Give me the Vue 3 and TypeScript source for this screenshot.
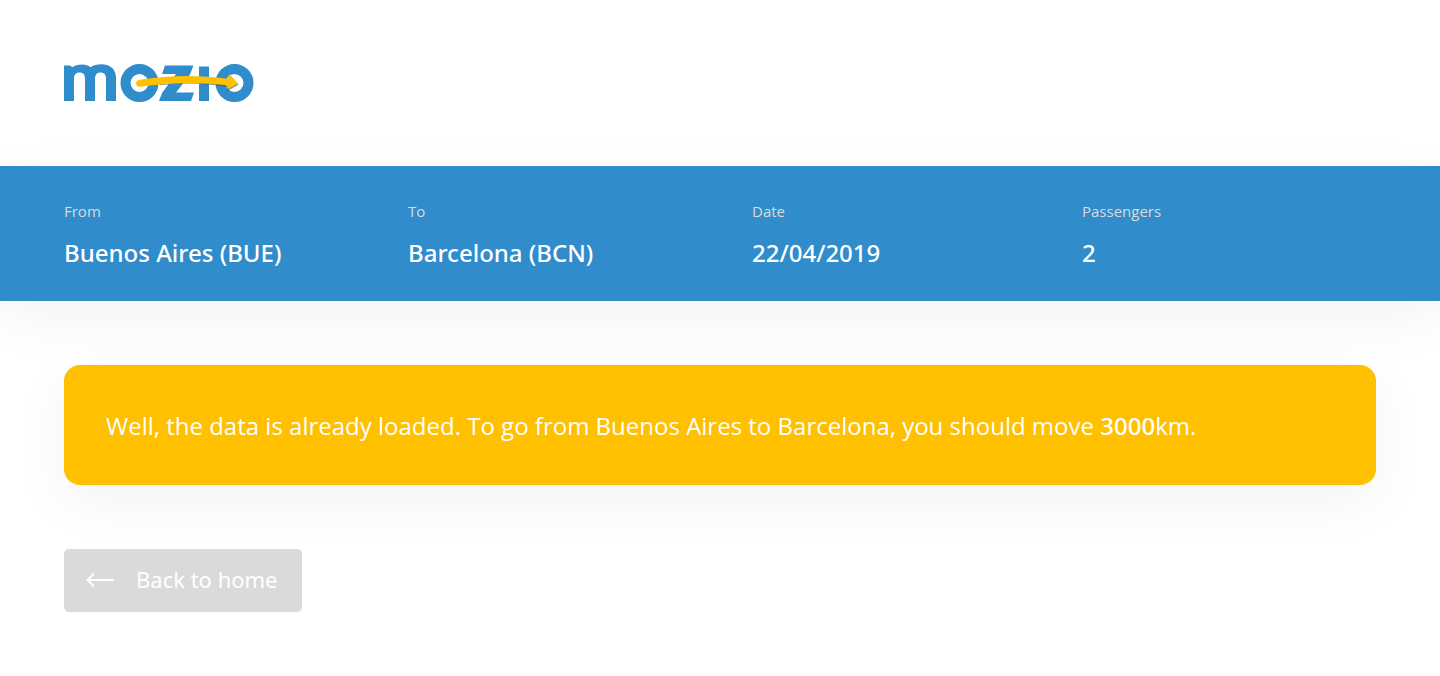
<script setup lang="ts">
interface TripDetail {
  label: string
  value: string
}

const trip: TripDetail[] = [
  { label: 'From', value: 'Buenos Aires (BUE)' },
  { label: 'To', value: 'Barcelona (BCN)' },
  { label: 'Date', value: '22/04/2019' },
  { label: 'Passengers', value: '2' },
]
</script>

<template>
  <div class="page">
    <header class="header">
      <svg class="logo" width="190" height="40" viewBox="0 0 190 40" role="img" aria-label="Mozio">
        <g fill="#308ccb">
          <path d="M0 1.5H6L8.5 3.2C11 1.4 14 .5 18 .5C22 .5 24.500 1.500 26.500 3.200C29.500 1 33 .3 37 .3C47 .3 52 6 52 14V37H42V15C42 10.500 40 8.500 36.500 8.500C33 8.500 31 10.500 31 15V37H21V15C21 10.500 19 8.500 15.500 8.500C12 8.500 10 10.500 10 15V37H0Z" />
          <path d="M101 1.500H129.500L126 10.500L112 28.500H130L127 37H95L98 29L112 10H98Z" />
          <path d="M135 2.500H145V37H135Z" />
        </g>
        <g fill="none" stroke="#308ccb" stroke-width="10">
          <circle cx="75.500" cy="19" r="14" />
          <circle cx="170.500" cy="19" r="14" />
        </g>
        <path d="M96 20.500C118 17.500 142 18.500 164.500 22.200L164 25.500L174 20" fill="none" stroke="#454a45" stroke-opacity=".6" stroke-width="1.500" />
        <path d="M75 16C104 11.300 135 10.800 163.500 14.800L165.500 10L174 19.500L163.500 25L164.500 21.500C135 18 104 18.500 76 22.800C71 23 71 16.800 75 16Z" fill="#ffc000" />
      </svg>
    </header>

    <section class="summary" aria-label="Trip details">
      <dl class="trip">
        <div v-for="item in trip" :key="item.label">
          <dt>{{ item.label }}</dt>
          <dd>{{ item.value }}</dd>
        </div>
      </dl>
    </section>

    <main class="content">
      <p class="message">
        Well, the data is already loaded. To go from Buenos Aires to Barcelona, you should move
        <strong>3000</strong>km.
      </p>
      <a class="back" href="#">
        <svg width="30" height="16" viewBox="0 0 30 16" aria-hidden="true">
          <path d="M28 8H2M8 1.500L1.500 8L8 14.500" fill="none" stroke="#fff" stroke-width="2" />
        </svg>
        <span>Back to home</span>
      </a>
    </main>
  </div>
</template>

<style>
body {
  margin: 0;
  background: #fff;
}
</style>

<style scoped>
.page {
  font-family: "Open Sans", "Noto Sans", sans-serif;
  color: #fff;
}

.header {
  padding: 64px 64px 62px;
}

.logo {
  display: block;
}

.summary {
  padding: 32px 64px;
  background: #308ccb;
  box-shadow: 0 16px 56px rgba(0, 0, 0, 0.05);
}

.trip {
  display: grid;
  grid-template-columns: 344fr 344fr 330fr 294fr;
  margin: 0;
}

dt {
  margin-bottom: 14px;
  font-size: 15px;
  line-height: 27px;
  color: #dadada;
}

dd {
  margin: 0;
  padding-bottom: 2px;
  font-family: "Noto Sans", sans-serif;
  font-size: 24px;
  font-weight: 500;
  line-height: 28px;
}

.content {
  display: flex;
  flex-direction: column;
  align-items: flex-start;
  gap: 64px;
  padding: 64px;
}

.message {
  box-sizing: border-box;
  width: 100%;
  margin: 0;
  padding: 43px 42px 41px;
  border-radius: 16px;
  background: #ffc000;
  box-shadow: 0 16px 56px rgba(0, 0, 0, 0.05);
  font-size: 24px;
  line-height: 36px;
}

.message strong {
  font-family: "Noto Sans", sans-serif;
  font-weight: 500;
}

.back {
  display: flex;
  align-items: center;
  gap: 20px;
  padding: 13px 24px 15px 22px;
  border-radius: 5px;
  background: #dadada;
  color: #fff;
  font-family: "Noto Sans", sans-serif;
  font-size: 22px;
  line-height: 35px;
  text-decoration: none;
}
</style>
